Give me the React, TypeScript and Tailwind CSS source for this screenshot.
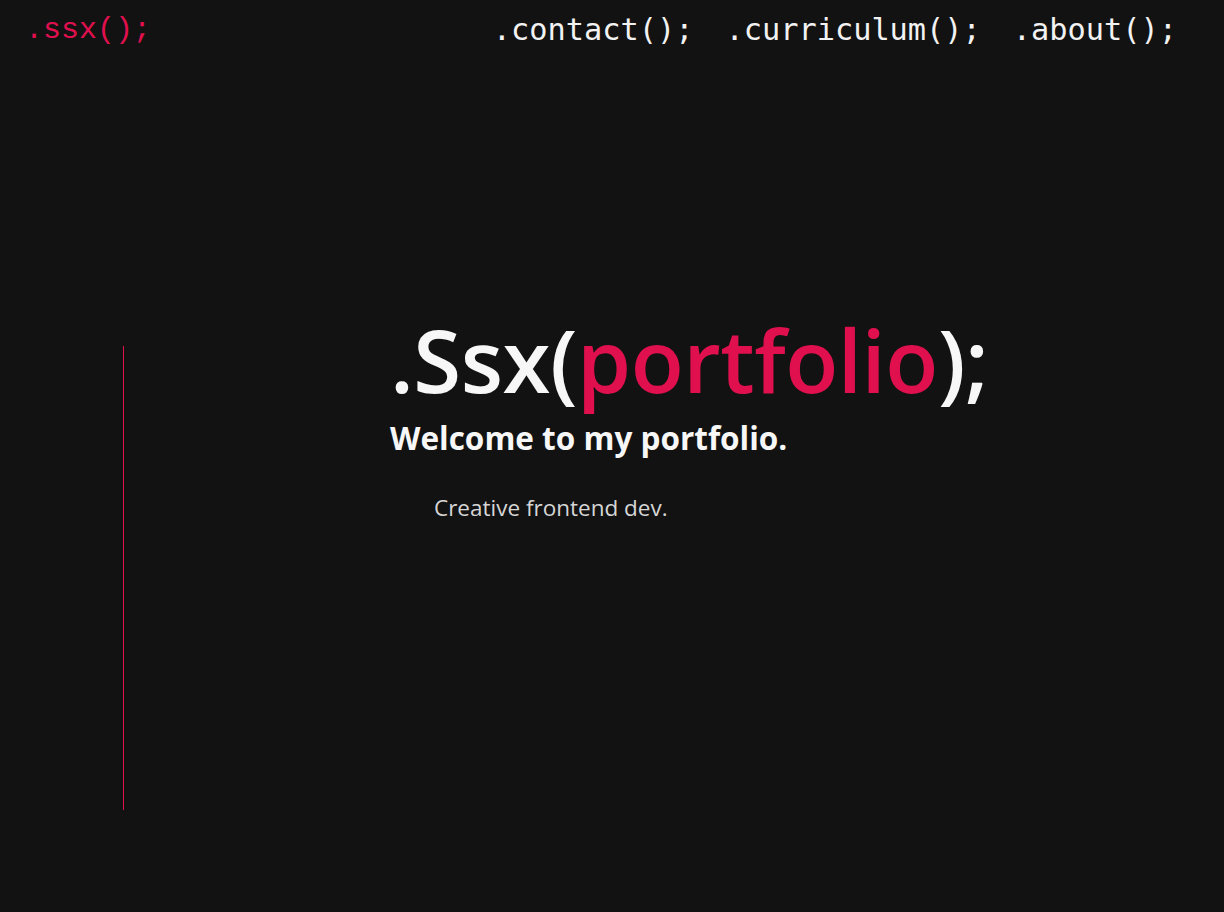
const navLinks = [".contact();", ".curriculum();", ".about();"];

export default function App() {
  return (
    <div className="min-h-screen w-full bg-[#121212] text-white overflow-hidden">
      <header className="flex h-[60px] items-center justify-between pl-[25px] pr-[47px] leading-[36px]">
        <a className="font-['Liberation_Mono',monospace] text-[30px] text-[#e0104f]">.ssx();</a>
        <nav className="flex items-center gap-[32px] font-['DejaVu_Sans_Mono',monospace] text-[30.3px]">
          {navLinks.map((link) => (
            <a key={link} className="text-[#f2f2f2]">
              {link}
            </a>
          ))}
        </nav>
      </header>

      <main className="flex items-start pt-[286px]">
        <div className="ml-[123px] h-[464px] w-px bg-[#e0104f]" />
        <section className="ml-[266px] -mt-[31px] flex flex-col font-['Open_Sans',sans-serif]">
          <h1 className="text-[87px] leading-[88px] font-semibold tracking-[-0.5px] text-[#f7f7f7]">
            .Ssx(<span className="text-[#e0104f]">portfolio</span>);
          </h1>
          <h2 className="mt-[17px] text-[31.5px] leading-[36px] font-bold text-[#f7f7f7]">
            Welcome to my portfolio.
          </h2>
          <p className="mt-[38px] ml-[44px] text-[22.5px] leading-[28px] text-[#d6d6d6]">
            Creative frontend dev.
          </p>
        </section>
      </main>
    </div>
  );
}
